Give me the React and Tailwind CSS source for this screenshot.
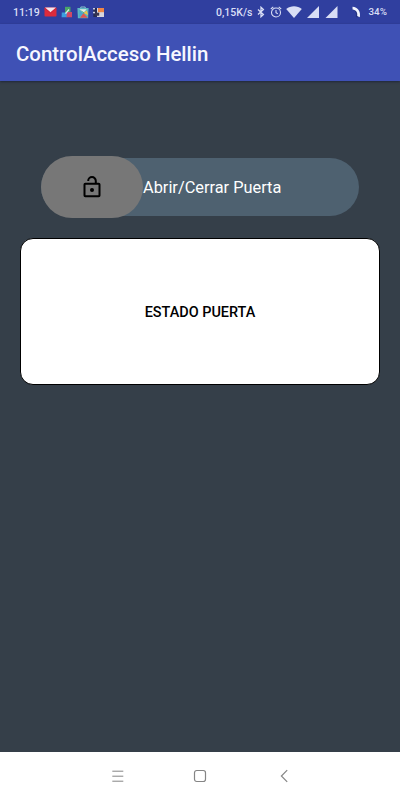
function StatusBar() {
  return (
    <header className="flex h-6 items-center bg-[#303f9f] pl-[13px] pr-[13px] text-[#d9def5]">
      <span className="w-[27px] whitespace-nowrap pt-[2px] text-[10.6px] font-medium leading-[22px]">11:19</span>
      <svg className="ml-[4px] h-[10px] w-[13px]" viewBox="0 0 13 10">
        <rect x="0.5" y="0.5" width="12" height="9" rx="0.8" fill="#dc2b3c" />
        <path d="M1 0.5h11L6.5 5.3z" fill="#f4e6ed" />
        <path d="M0.7 1l5.8 5L12.3 1" fill="none" stroke="#c71f3a" strokeWidth="0.5" />
      </svg>
      <svg className="ml-[4px] h-[12px] w-[12px]" viewBox="0 0 12 12">
        <path d="M4 0.8h5.5v6.4H4z" fill="#4aa568" />
        <path d="M0.8 6.5h5.6v4.8H.6z" fill="#3a9fe0" />
        <path d="M6 6h5v5.3H5.4z" fill="#d04965" />
        <path d="M4.5 7.7L8 3.5" stroke="#d8eee8" strokeWidth="1.3" />
      </svg>
      <svg className="ml-[4px] h-[13px] w-[12px]" viewBox="0 0 12 13">
        <path d="M3.8 2.5V1h4.4v1.5" fill="none" stroke="#8dc8cf" />
        <path d="M0.4 2h11.2l-.5 10.2H.9z" fill="#5bb7c2" />
        <path d="M2.5 3.5l4.5 4-5 4z" fill="#4aa7cd" />
        <path d="M2.5 3.2h7.2L6.2 7z" fill="#e8ece4" />
        <path d="M3 3.8l5 3.2-1 1z" fill="#3fae86" />
        <path d="M6.5 7l3.4-2.5 1.2 4.5z" fill="#f5c544" />
        <path d="M6.4 7.3l4.5 4.5H3z" fill="#e25450" />
      </svg>
      <svg className="ml-[4px] h-[11px] w-[12px]" viewBox="0 0 12 11">
        <rect x="0.3" y="1" width="4" height="9" fill="#262c55" />
        <rect x="0" y="1" width="2" height="1.5" fill="#c9cee2" />
        <rect x="0" y="4.8" width="2" height="1.5" fill="#c9cee2" />
        <rect x="4" y="1" width="7" height="9" fill="#d8d6dd" />
        <rect x="5" y="1" width="6" height="4.2" fill="#ef8546" />
        <rect x="2.2" y="5.7" width="4" height="3" fill="#393652" />
      </svg>

      <div className="ml-auto flex items-center">
        <span className="w-[37px] whitespace-nowrap pt-[2px] text-[10.5px] font-medium leading-[22px]">0,15K/s</span>
        <svg className="ml-[4px] h-[12px] w-[8px]" viewBox="0 0 8 12" fill="none" stroke="currentColor" strokeWidth="1.3">
          <path d="M1 3.4l5.4 5L4 10.7V1.3l2.4 2.3L1 8.6" />
        </svg>
        <svg className="ml-[5px] h-[12px] w-[12px]" viewBox="0 0 12 12" fill="none" stroke="currentColor" strokeWidth="1.1">
          <circle cx="6" cy="6.5" r="4.5" />
          <path d="M6 4v2.7l1.8 1.1M0.8 3L3.3.9M11.2 3L8.7.9" />
        </svg>
        <svg className="ml-[4px] h-[12px] w-[16px]" viewBox="0 0 16 12">
          <path d="M0.2 3.1C4.7-.7 11.3-.7 15.8 3.1L8 12z" fill="currentColor" />
        </svg>
        <svg className="ml-[5px] h-[12px] w-[12px]" viewBox="0 0 12 12">
          <path d="M12 0v12H0z" fill="currentColor" />
        </svg>
        <svg className="ml-[6px] h-[12px] w-[13px]" viewBox="0 0 13 12">
          <path d="M12.5 0v12H.5z" fill="currentColor" />
        </svg>
        <svg className="ml-[13px] h-[13px] w-[10px]" viewBox="0 0 10 13" fill="none">
          <path d="M1 2.5C4.5 3 6.8 6 5.8 11.3" stroke="#24327f" strokeWidth="2" />
          <path d="M1.5 .8C6.8 1.2 10 5.4 8.8 11.2L6.2 9.9C6.8 6.2 5 4 1.5 3.4z" fill="#f2f4ff" />
        </svg>
        <span className="ml-[7.5px] w-[18.5px] whitespace-nowrap text-[9.8px] font-medium leading-6">34%</span>
      </div>
    </header>
  );
}

function SlideControl() {
  return (
    <div className="ml-[40.5px] flex h-[62px] w-[318.7px] items-center">
      <div className="flex h-[58px] w-full items-center rounded-full bg-[#4e6170]">
        <button className="-mt-px flex h-[62px] w-[102px] shrink-0 items-center justify-center rounded-full bg-[#777777]" aria-label="Abrir">
          <svg className="h-[24px] w-[24px]" viewBox="0 0 24 24" fill="none" stroke="#000" strokeWidth="2" strokeLinejoin="round">
            <rect x="4.5" y="8.7" width="15" height="12.6" rx="0.8" />
            <path d="M15.8 8.7V5.9a3.8 3.8 0 0 0-7.6 0" />
            <circle cx="12" cy="15" r="2" fill="#000" stroke="none" />
          </svg>
        </button>
        <span className="ml-[0.5px] whitespace-nowrap pt-[2px] text-[16.35px] leading-5 text-white">Abrir/Cerrar Puerta</span>
      </div>
    </div>
  );
}

function NavigationBar() {
  return (
    <nav className="flex h-12 items-center bg-white pl-[111px] pr-[109px] text-[#858585]">
      <svg className="h-[14px] w-[14px]" viewBox="0 0 14 14" fill="none" stroke="currentColor">
        <path d="M1.3 2.2h11M1.3 7.2h11M1.3 12.2h11" />
      </svg>
      <svg className="ml-[68px] h-[14px] w-[14px]" viewBox="0 0 14 14" fill="none" stroke="currentColor" strokeWidth="1.2">
        <rect x="1.5" y="1.5" width="11" height="11" rx="2.2" />
      </svg>
      <svg className="ml-auto h-[14px] w-[14px]" viewBox="0 0 14 14" fill="none" stroke="currentColor" strokeWidth="1.2">
        <path d="M10.2 1.2L4.4 7l5.8 5.8" />
      </svg>
    </nav>
  );
}

export default function App() {
  return (
    <div className="flex h-[800px] w-[400px] flex-col overflow-hidden bg-[#353f49] font-[Roboto,sans-serif]">
      <StatusBar />
      <div className="z-10 flex h-[57px] shrink-0 items-center bg-[#3f51b5] px-4 shadow-[0_1px_2px_#20273a]">
        <h1 className="whitespace-nowrap pt-[2px] text-[20.45px] font-medium leading-6 text-[#f7f7ff]">ControlAcceso Hellin</h1>
      </div>
      <main className="flex flex-1 flex-col pt-[75px]">
        <SlideControl />
        <section className="mx-[20.4px] mt-[19.6px] flex h-[147.8px] items-center justify-center rounded-[13px] border-[1.5px] border-black bg-white">
          <span className="whitespace-nowrap pt-[3px] text-[14.45px] font-medium text-black">ESTADO PUERTA</span>
        </section>
      </main>
      <NavigationBar />
    </div>
  );
}
